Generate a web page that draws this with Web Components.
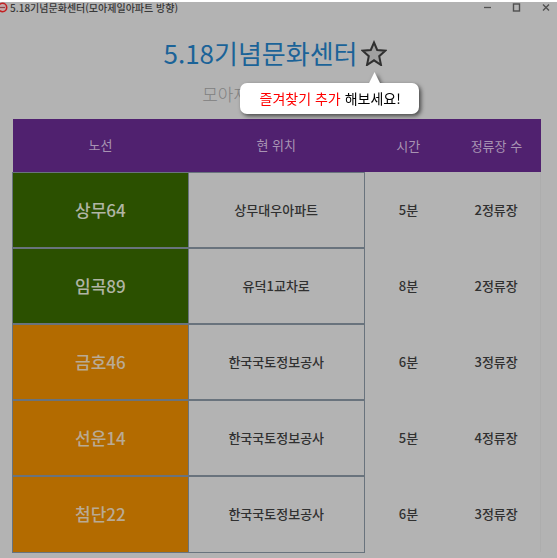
<!DOCTYPE html>
<html lang="ko">
<head>
<meta charset="utf-8">
<title>5.18기념문화센터</title>
<style>
html { min-height: 100%; background: #b3b3b3; }
body { margin: 0; font-family: "Noto Sans CJK KR", "Noto Sans", sans-serif; color: #303030; }
</style>
</head>
<body>
<bus-window></bus-window>

<script>
const define = (name, html, setup) => {
  const template = document.createElement("template");
  template.innerHTML = html;
  customElements.define(name, class extends HTMLElement {
    connectedCallback() {
      if (this.shadowRoot) return;
      this.attachShadow({ mode: "open" }).append(template.content.cloneNode(true));
      if (setup) setup(this, this.shadowRoot);
    }
  });
};

define("window-bar", `
<style>
:host { display: flex; align-items: center; height: 12px; border-top: 2px solid #fff; color: #383838; }
.logo { flex: none; width: 8px; height: 12px; margin-right: 2px; }
.name { flex: 1; font-size: 10px; line-height: 12px; font-weight: 500; white-space: nowrap; }
.controls { display: flex; gap: 17px; padding-right: 5px; }
button { display: block; width: 12px; height: 12px; padding: 0; border: 0; background: none; color: #505050; }
svg { display: block; }
</style>
<svg class="logo" viewBox="0 0 8 12"><circle cx="2.500" cy="5.500" r="4.200" fill="#c4a9a9" stroke="#c31f22" stroke-width="1.600"/><path d="M0 5.500H5" stroke="#8b4346" stroke-width="1.200"/></svg>
<span class="name"><slot></slot></span>
<div class="controls">
<button aria-label="최소화"><svg width="12" height="12" viewBox="0 0 12 12"><path d="M2 5.500H9" stroke="currentColor" stroke-width="1.300"/></svg></button>
<button aria-label="최대화"><svg width="12" height="12" viewBox="0 0 12 12"><rect x="2.500" y="2" width="6" height="7" fill="none" stroke="currentColor" stroke-width="1.400"/></svg></button>
<button aria-label="닫기"><svg width="12" height="12" viewBox="0 0 12 12"><path d="M3 2.500L9 8.500M9 2.500L3 8.500" stroke="currentColor" stroke-width="1.400"/></svg></button>
</div>`);

define("hint-bubble", `
<style>
:host { display: block; padding: 5px 20px; border-radius: 7px; background: #fff; color: #000;
  font-size: 14px; line-height: 21px; text-align: center; white-space: nowrap; filter: drop-shadow(2px 2px 2px #0009); }
.tip { position: absolute; left: 129px; top: -11px; width: 12px; height: 12px; background: #fff; clip-path: polygon(50% 0, 100% 100%, 0 100%); }
::slotted(strong) { color: #f00; font-weight: 400; }
</style>
<span class="tip"></span><slot></slot>`);

define("favorite-star", `
<style>
:host { display: block; position: relative; width: 26px; height: 26px; }
button { display: block; padding: 0; border: 0; background: none; }
svg { display: block; }
hint-bubble { position: absolute; z-index: 1; left: -121px; top: 43px; width: 139px; }
</style>
<button aria-label="즐겨찾기 추가"><svg width="26" height="26" viewBox="0 0 26 26"><path d="M13 2.500L16.200 10L24.300 10.700L18.200 16.200L20 25L13 20.300L6 25L7.800 16.200L1.700 10.700L9.800 10Z" fill="#a0a0a0" stroke="#303030" stroke-width="2"/></svg></button>
<hint-bubble role="status"><strong>즐겨찾기 추가</strong> 해보세요!</hint-bubble>`);

define("stop-heading", `
<style>
:host { display: block; padding: 21px 7px 12px 0; text-align: center; }
.line { display: flex; justify-content: center; align-items: center; gap: 3px; }
h1 { margin: 0; font-size: 26px; line-height: 36px; font-weight: 400; color: #1b6398; white-space: nowrap; }
p { margin: 10px 0 0; font-size: 17px; line-height: 26px; font-weight: 300; color: #808080; }
</style>
<div class="line"><h1><slot></slot></h1><favorite-star></favorite-star></div>
<p><slot name="direction"></slot></p>`);

define("arrival-table", `
<style>
:host { display: block; padding: 0 16px 7px 12px; }
table { width: 100%; table-layout: fixed; border-collapse: collapse; }
.wide { width: 33.3%; }
th, td { box-sizing: border-box; padding: 0 0 1px; text-align: center; }
thead th { height: 53px; background: #50216f; color: #a894b3; font-size: 13px; font-weight: 400; }
tbody tr { height: 76px; font-size: 13px; font-weight: 500; }
tbody th, .place { border: 1px solid #69737d; }
.place, tbody th { border-bottom-width: 2px; }
tbody tr:last-child > * { border-bottom-width: 1px; }
tbody th { font-size: 17px; font-weight: 500; color: #b0b5a5; background: #2b5000; }
tbody th.orange { background: #b36b00; color: #b9aa95; }
td:last-child { border-right: 1px solid #adadad; }
</style>
<table>
<colgroup><col class="wide"><col class="wide"><col><col></colgroup>
<thead><tr><th scope="col">노선</th><th scope="col">현 위치</th><th scope="col">시간</th><th scope="col">정류장 수</th></tr></thead>
<tbody></tbody>
</table>`, (host, root) => {
  const rows = [
    ["상무64", "상무대우아파트", "5분", "2정류장", "green"],
    ["임곡89", "유덕1교차로", "8분", "2정류장", "green"],
    ["금호46", "한국국토정보공사", "6분", "3정류장", "orange"],
    ["선운14", "한국국토정보공사", "5분", "4정류장", "orange"],
    ["첨단22", "한국국토정보공사", "6분", "3정류장", "orange"]
  ];
  root.querySelector("tbody").innerHTML = rows.map(([route, place, time, stops, kind]) =>
    `<tr><th scope="row" class="${kind}">${route}</th><td class="place">${place}</td><td>${time}</td><td>${stops}</td></tr>`).join("");
});

define("bus-window", `
<style>:host { display: block; background: #b3b3b3; }</style>
<window-bar>5.18기념문화센터(모아제일아파트 방향)</window-bar>
<main>
<stop-heading>5.18기념문화센터<span slot="direction">모아제일아파트 방향</span></stop-heading>
<arrival-table></arrival-table>
</main>`);
</script>
</body>
</html>
